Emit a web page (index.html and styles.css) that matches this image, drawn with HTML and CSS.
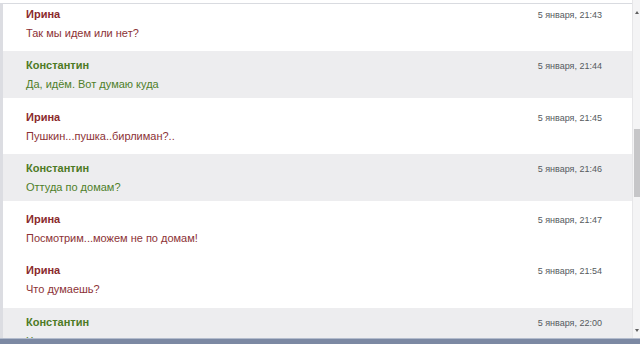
FILE: index.html
```html
<!DOCTYPE html>
<html lang="ru">
<head>
<meta charset="utf-8">
<link rel="stylesheet" href="styles.css">
</head>
<body>
<div class="screen">
  <div class="main">
    <div class="list">
      <div class="row first">
        <div class="line"><span class="name irina">Ирина</span><span class="date">5 января, 21:43</span></div>
        <div class="text irina-t">Так мы идем или нет?</div>
      </div>
      <div class="row alt">
        <div class="line"><span class="name kost">Константин</span><span class="date">5 января, 21:44</span></div>
        <div class="text kost-t">Да, идём. Вот думаю куда</div>
      </div>
      <div class="row">
        <div class="line"><span class="name irina">Ирина</span><span class="date">5 января, 21:45</span></div>
        <div class="text irina-t">Пушкин...пушка..бирлиман?..</div>
      </div>
      <div class="row alt">
        <div class="line"><span class="name kost">Константин</span><span class="date">5 января, 21:46</span></div>
        <div class="text kost-t">Оттуда по домам?</div>
      </div>
      <div class="row">
        <div class="line"><span class="name irina">Ирина</span><span class="date">5 января, 21:47</span></div>
        <div class="text irina-t">Посмотрим...можем не по домам!</div>
      </div>
      <div class="row">
        <div class="line"><span class="name irina">Ирина</span><span class="date">5 января, 21:54</span></div>
        <div class="text irina-t">Что думаешь?</div>
      </div>
      <div class="row alt">
        <div class="line"><span class="name kost">Константин</span><span class="date">5 января, 22:00</span></div>
        <div class="text kost-t">Хорошо думаю</div>
      </div>
    </div>
    <div class="scrollbar">
      <div class="arrow up"></div>
      <div class="track"><div class="thumb"></div></div>
      <div class="arrow down"></div>
    </div>
  </div>
  <div class="bottombar"></div>
</div>
</body>
</html>
```
FILE: styles.css
```css
html, body {
  margin: 0;
  padding: 0;
  background: #ffffff;
}
body {
  font-family: "Liberation Sans", Arial, sans-serif;
  width: 640px;
  height: 344px;
  overflow: hidden;
}
.screen {
  display: flex;
  flex-direction: column;
  height: 344px;
}
.main {
  display: flex;
  height: 338px;
  overflow: hidden;
}
.list {
  flex: 1;
  margin-top: 3px;
  border-top: 1px solid #d9dbe0;
  border-left: 3px solid #dcdde2;
  overflow: hidden;
}
.row {
  height: 47px;
  margin-bottom: 4.3px;
  padding: 8px 30px 0 23px;
  box-sizing: border-box;
}
.row.first {
  margin-top: -4px;
}
.row.alt {
  background: #ededef;
}
.line {
  display: flex;
  justify-content: space-between;
  align-items: baseline;
  height: 16px;
}
.name {
  font-weight: bold;
  font-size: 11px;
}
.irina { color: #8a2a2c; }
.kost { color: #4d7a25; }
.date {
  font-size: 9px;
  color: #555a60;
}
.text {
  font-size: 11px;
  margin-top: 3px;
}
.irina-t { color: #8c3236; }
.kost-t { color: #4f7f2a; }
.scrollbar {
  width: 7px;
  display: flex;
  flex-direction: column;
  background: #f4f4f5;
  border-left: 1px solid #e6e6e8;
}
.track {
  flex: 1;
  position: relative;
}
.thumb {
  position: absolute;
  left: 1px;
  right: 0;
  top: 107px;
  height: 68px;
  background: #c6c6c8;
}
.arrow {
  height: 22px;
  position: relative;
}
.arrow::after {
  content: "";
  position: absolute;
  left: 2px;
  width: 0;
  height: 0;
  border-left: 2px solid transparent;
  border-right: 2px solid transparent;
}
.arrow.up::after {
  top: 11px;
  border-bottom: 3px solid #606060;
}
.arrow.down::after {
  bottom: 6px;
  border-top: 3px solid #606060;
}
.bottombar {
  height: 6px;
  background: #7c89a3;
  border-top: 1px solid #b3bccd;
  box-sizing: border-box;
}
```
